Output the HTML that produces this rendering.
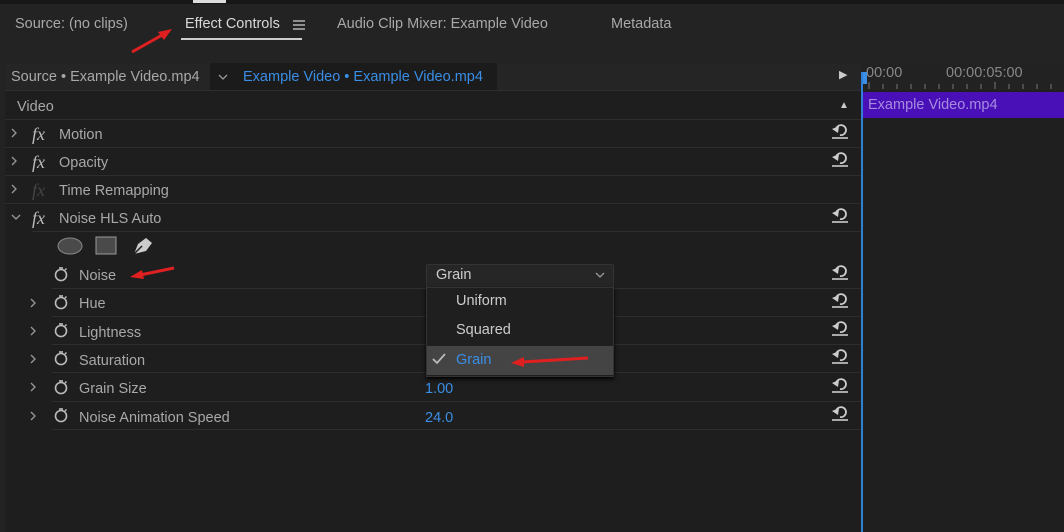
<!DOCTYPE html><html><head><style>
body{margin:0;width:1064px;height:532px;background:#232323;font-family:"Liberation Sans",sans-serif;font-size:14.5px;color:#a8a8a8;position:relative;overflow:hidden}
.a{position:absolute;white-space:nowrap}
.ln{position:absolute;height:1px;background:#2e2e2e}
.rs{position:absolute;left:830px;width:20px;height:20px}
.blue{color:#3a8ee6}
.ch{position:absolute;width:10px;height:10px}
</style></head><body>
<svg width="0" height="0" style="position:absolute"><defs>
<symbol id="sw" viewBox="0 0 16 16"><circle cx="8" cy="9" r="5.5" fill="none" stroke="#bbb" stroke-width="1.6"/><line x1="6" y1="2" x2="10" y2="2" stroke="#bbb" stroke-width="1.6"/><line x1="12" y1="4" x2="13.5" y2="2.5" stroke="#bbb" stroke-width="1.4"/></symbol>
<symbol id="rs" viewBox="0 0 20 20"><path d="M6 9 A5 5 0 1 1 10 14" fill="none" stroke="#ccc" stroke-width="1.8"/><polygon points="2,8 9,5 8,12" fill="#ccc"/><line x1="2" y1="17" x2="18" y2="17" stroke="#ccc" stroke-width="1.6"/></symbol>
<symbol id="cr" viewBox="0 0 10 10"><path d="M3 1 L7 5 L3 9" fill="none" stroke="#999" stroke-width="1.3"/></symbol>
<symbol id="cd" viewBox="0 0 10 10"><path d="M1 3 L5 7 L9 3" fill="none" stroke="#999" stroke-width="1.3"/></symbol>
</defs></svg>
<div class="a" style="left:0;top:0;width:1064px;height:4px;background:#171717"></div>
<div class="a" style="left:193px;top:0;width:33px;height:3px;background:#ddd"></div>
<div class="a" style="left:15px;top:16px">Source: (no clips)</div>
<div class="a" style="left:185px;top:16px;color:#d8d8d8">Effect Controls</div>
<svg class="a" style="left:293px;top:19px" width="12" height="12"><g stroke="#ccc" stroke-width="1.3"><line x1="0" y1="2" x2="12" y2="2"/><line x1="0" y1="6" x2="12" y2="6"/><line x1="0" y1="10" x2="12" y2="10"/></g></svg>
<div class="a" style="left:181px;top:38px;width:121px;height:2px;background:#ccc"></div>
<div class="a" style="left:337px;top:16px">Audio Clip Mixer: Example Video</div>
<div class="a" style="left:611px;top:16px">Metadata</div>
<svg class="a" style="left:128px;top:24px" width="48" height="32"><line x1="4" y1="28" x2="36" y2="10" stroke="#e02020" stroke-width="3"/><polygon points="44,5 30,8 36,16" fill="#e02020"/></svg>
<div class="a" style="left:5px;top:63px;width:856px;height:469px;background:#1e1e1e"></div>
<div class="a" style="left:5px;top:63px;width:856px;height:27px;background:#252525"></div>
<div class="a" style="left:210px;top:63px;width:287px;height:27px;background:#1b1b1b"></div>
<div class="a" style="left:11px;top:69px">Source • Example Video.mp4</div>
<svg class="ch" style="left:218px;top:72px"><use href="#cd"/></svg>
<div class="a blue" style="left:243px;top:69px">Example Video • Example Video.mp4</div>
<div class="a" style="left:839px;top:68px;font-size:11px;color:#ccc">▶</div>
<div class="a" style="left:17px;top:99px">Video</div>
<div class="a" style="left:839px;top:100px;font-size:10px;color:#ccc">▲</div>
<div class="a" style="left:861px;top:63px;width:203px;height:469px;background:#1f1f1f"></div>
<div class="a" style="left:861px;top:63px;width:203px;height:27px;background:#222"></div>
<div class="a" style="left:866px;top:65px;color:#888">00:00</div>
<div class="a" style="left:946px;top:65px;color:#888">00:00:05:00</div>
<svg class="a" style="left:861px;top:80px" width="203" height="10"><g stroke="#777"><line x1="8" y1="2" x2="8" y2="9"/><line x1="22" y1="4" x2="22" y2="9"/><line x1="36" y1="4" x2="36" y2="9"/><line x1="50" y1="4" x2="50" y2="9"/><line x1="64" y1="4" x2="64" y2="9"/><line x1="78" y1="4" x2="78" y2="9"/><line x1="92" y1="4" x2="92" y2="9"/><line x1="106" y1="4" x2="106" y2="9"/><line x1="120" y1="4" x2="120" y2="9"/><line x1="134" y1="2" x2="134" y2="9"/><line x1="148" y1="4" x2="148" y2="9"/><line x1="162" y1="4" x2="162" y2="9"/><line x1="176" y1="4" x2="176" y2="9"/><line x1="190" y1="4" x2="190" y2="9"/></g></svg>
<div class="a" style="left:861px;top:72px;width:6px;height:12px;background:#3a8ee6"></div>
<div class="a" style="left:861px;top:72px;width:2px;height:460px;background:#2f7fd6"></div>
<div class="a" style="left:863px;top:92px;width:201px;height:26px;background:#4a10b8"></div>
<div class="a" style="left:868px;top:97px;color:#a68be0">Example Video.mp4</div>
<div class="ln" style="left:5px;top:90px;width:856px"></div>
<div class="ln" style="left:5px;top:119px;width:856px"></div>
<div class="ln" style="left:5px;top:147px;width:856px"></div>
<div class="ln" style="left:5px;top:175px;width:856px"></div>
<div class="ln" style="left:5px;top:203px;width:856px"></div>
<div class="ln" style="left:32px;top:231px;width:829px"></div>
<div class="ln" style="left:52px;top:288px;width:809px"></div>
<div class="ln" style="left:52px;top:316px;width:809px"></div>
<div class="ln" style="left:52px;top:344px;width:809px"></div>
<div class="ln" style="left:52px;top:372px;width:809px"></div>
<div class="ln" style="left:52px;top:401px;width:809px"></div>
<div class="ln" style="left:52px;top:429px;width:809px"></div>
<svg class="ch" style="left:9px;top:128px"><use href="#cr"/></svg><div class="a" style="left:32px;top:124px;font-style:italic;font-family:'Liberation Serif';font-size:18px;color:#bbb">fx</div><div class="a" style="left:59px;top:127px">Motion</div>
<svg class="ch" style="left:9px;top:156px"><use href="#cr"/></svg><div class="a" style="left:32px;top:152px;font-style:italic;font-family:'Liberation Serif';font-size:18px;color:#bbb">fx</div><div class="a" style="left:59px;top:155px">Opacity</div>
<svg class="ch" style="left:9px;top:184px"><use href="#cr"/></svg><div class="a" style="left:32px;top:180px;font-style:italic;font-family:'Liberation Serif';font-size:18px;color:#444">fx</div><div class="a" style="left:59px;top:183px">Time Remapping</div>
<svg class="ch" style="left:11px;top:212px"><use href="#cd"/></svg><div class="a" style="left:32px;top:208px;font-style:italic;font-family:'Liberation Serif';font-size:18px;color:#bbb">fx</div><div class="a" style="left:59px;top:211px">Noise HLS Auto</div>
<svg class="a" style="left:56px;top:234px" width="100" height="24"><ellipse cx="14" cy="12" rx="12" ry="8" fill="#4a4a4a" stroke="#888"/><rect x="40" y="3" width="20" height="17" fill="#4a4a4a" stroke="#999"/><path d="M78 20 L82 10 L90 4 L96 9 L90 17 Z" fill="#ccc"/><line x1="78" y1="20" x2="86" y2="12" stroke="#1e1e1e" stroke-width="1.5"/></svg>
<svg class="a" style="left:53px;top:266px" width="16" height="16"><use href="#sw"/></svg><div class="a" style="left:79px;top:268px">Noise</div>
<svg class="ch" style="left:28px;top:298px"><use href="#cr"/></svg><svg class="a" style="left:53px;top:294px" width="16" height="16"><use href="#sw"/></svg><div class="a" style="left:79px;top:296px">Hue</div>
<svg class="ch" style="left:28px;top:326px"><use href="#cr"/></svg><svg class="a" style="left:53px;top:322px" width="16" height="16"><use href="#sw"/></svg><div class="a" style="left:79px;top:325px">Lightness</div>
<svg class="ch" style="left:28px;top:354px"><use href="#cr"/></svg><svg class="a" style="left:53px;top:350px" width="16" height="16"><use href="#sw"/></svg><div class="a" style="left:79px;top:353px">Saturation</div>
<svg class="ch" style="left:28px;top:382px"><use href="#cr"/></svg><svg class="a" style="left:53px;top:379px" width="16" height="16"><use href="#sw"/></svg><div class="a" style="left:79px;top:381px">Grain Size</div>
<svg class="ch" style="left:28px;top:411px"><use href="#cr"/></svg><svg class="a" style="left:53px;top:407px" width="16" height="16"><use href="#sw"/></svg><div class="a" style="left:79px;top:410px">Noise Animation Speed</div>
<div class="a blue" style="left:425px;top:381px">1.00</div>
<div class="a blue" style="left:425px;top:410px">24.0</div>
<svg class="a" style="left:126px;top:262px" width="54" height="20"><line x1="14" y1="13" x2="48" y2="6" stroke="#e02020" stroke-width="3"/><polygon points="4,15 16,8 18,17" fill="#e02020"/></svg>
<svg class="rs" style="top:121px"><use href="#rs"/></svg>
<svg class="rs" style="top:149px"><use href="#rs"/></svg>
<svg class="rs" style="top:205px"><use href="#rs"/></svg>
<svg class="rs" style="top:262px"><use href="#rs"/></svg>
<svg class="rs" style="top:290px"><use href="#rs"/></svg>
<svg class="rs" style="top:318px"><use href="#rs"/></svg>
<svg class="rs" style="top:346px"><use href="#rs"/></svg>
<svg class="rs" style="top:375px"><use href="#rs"/></svg>
<svg class="rs" style="top:403px"><use href="#rs"/></svg>
<div class="a" style="left:426px;top:264px;width:186px;height:22px;background:#262626;border:1px solid #333;border-radius:2px"></div>
<div class="a" style="left:436px;top:267px;color:#ccc">Grain</div>
<svg class="ch" style="left:595px;top:270px"><use href="#cd"/></svg>
<div class="a" style="left:426px;top:287px;width:186px;height:88px;background:#1f1f1f;border:1px solid #333;box-shadow:0 2px 4px #000"></div>
<div class="a" style="left:427px;top:346px;width:186px;height:29px;background:#444"></div>
<div class="a" style="left:456px;top:293px;color:#ccc">Uniform</div>
<div class="a" style="left:456px;top:322px;color:#ccc">Squared</div>
<svg class="a" style="left:432px;top:353px" width="14" height="12"><path d="M1 6 L5 10 L13 1" fill="none" stroke="#bbb" stroke-width="1.8"/></svg>
<div class="a blue" style="left:456px;top:352px">Grain</div>
<svg class="a" style="left:508px;top:354px" width="84" height="14"><line x1="14" y1="8" x2="80" y2="4" stroke="#e02020" stroke-width="3"/><polygon points="3,9 16,3 16,13" fill="#e02020"/></svg>
</body></html>
